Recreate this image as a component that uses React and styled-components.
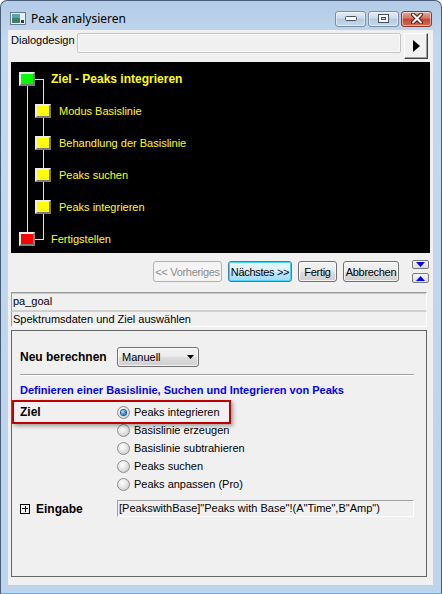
import styled, { createGlobalStyle, css } from "styled-components";

const Global = createGlobalStyle`
  html, body { margin: 0; padding: 0; background: #fff; overflow: hidden; }
  * { box-sizing: border-box; }
`;

const UI = `"Liberation Sans", Arial, sans-serif`;

const Window = styled.div`
  width: 442px;
  height: 594px;
  border: 1px solid #4a5d78;
  border-bottom-color: #2fc4d6;
  border-radius: 7px 7px 0 0;
  background: linear-gradient(180deg, #b3cbe6 0%, #c2d8ef 40px, #bcd4ec 100%);
  padding: 0 8px 8px 7px;
  display: flex;
  flex-direction: column;
  font-family: ${UI};
  font-size: 11px;
  color: #000;
`;

const TitleBar = styled.div`
  height: 29px;
  padding-top: 5px;
  display: flex;
  align-items: center;
`;

const TitleText = styled.span`
  font-family: "Noto Sans", "Open Sans", sans-serif;
  font-size: 12px;
  margin-left: 5px;
  flex: 1;
  color: #000;
`;

const Caption = styled.div`
  display: flex;
  gap: 2px;
  margin-right: 1px;
  margin-top: 1px;
`;

const CapBtn = styled.div`
  width: 31px;
  height: 16px;
  border-radius: 3px;
  border: 1px solid #7a8ca6;
  display: flex;
  align-items: center;
  justify-content: center;
  background: linear-gradient(180deg, #e4edf7 0%, #cbdaea 45%, #b5c9e0 50%, #c6d8ec 100%);
  box-shadow: inset 0 0 0 1px rgba(255, 255, 255, 0.5);
  ${(p) =>
    p.$close &&
    css`
      border-color: #8a3b2f;
      background: linear-gradient(180deg, #e9a99a 0%, #d8725e 45%, #c6432c 50%, #d86c4f 100%);
    `}
`;

const Client = styled.div`
  flex: 1;
  background: #f0f0f0;
  display: flex;
  flex-direction: column;
`;

const DesignRow = styled.div`
  height: 32px;
  display: flex;
  align-items: flex-start;
  padding: 0 5px 0 3px;
`;

const DesignLabel = styled.span`
  line-height: 20px;
  width: 66px;
`;

const DesignInput = styled.div`
  flex: 1;
  height: 20px;
  margin-top: 3px;
  border: 1px solid #c4c4c4;
  border-radius: 2px;
  background: #f0f0f0;
  box-shadow: inset 0 0 0 1px #fafafa;
`;

const PlayBtn = styled.div`
  width: 24px;
  height: 26px;
  margin: 3px 0 0 3px;
  border: 1px solid;
  border-color: #fff #404040 #404040 #fff;
  box-shadow: inset -1px -1px 0 #a0a0a0;
  background: #f0f0f0;
  display: flex;
  align-items: center;
  justify-content: center;
`;

const TreePanel = styled.div`
  position: relative;
  margin: 0 3px;
  height: 191px;
  padding-top: 1px;
  background: #000;
`;

const TreeLines = styled.svg`
  position: absolute;
  left: 0;
  top: 0;
  pointer-events: none;
`;

const TreeRow = styled.div`
  height: 32px;
  display: flex;
  align-items: center;
  padding-left: ${(p) => (p.$child ? 24 : 8)}px;
`;

const NodeBox = styled.div`
  position: relative;
  z-index: 1;
  width: 16px;
  height: 14px;
  border: 2px solid;
  border-color: #ececec #7c7c7c #7c7c7c #ececec;
  background: ${(p) => p.$color};
`;

const NodeText = styled.span`
  margin-left: ${(p) => (p.$child ? 8 : 16)}px;
  color: #ffff00;
  font-size: ${(p) => (p.$bold ? 12 : 11)}px;
  font-weight: ${(p) => (p.$bold ? 700 : 400)};
`;

const NavRow = styled.div`
  height: 39px;
  padding: 8px 4px 0 0;
  display: flex;
  justify-content: flex-end;
  align-items: flex-start;
`;

const Btn = styled.button`
  width: ${(p) => p.$w}px;
  height: 21px;
  margin-left: 6px;
  padding: 0;
  white-space: nowrap;
  letter-spacing: -0.3px;
  font-family: ${UI};
  font-size: 11px;
  color: #000;
  border: 1px solid #707070;
  border-radius: 3px;
  background: linear-gradient(180deg, #f2f2f2 0%, #ebebeb 50%, #dddddd 51%, #cfcfcf 100%);
  box-shadow: inset 0 0 0 1px rgba(255, 255, 255, 0.75);
  ${(p) =>
    p.$primary &&
    css`
      border-color: #3c7fb1;
      background: linear-gradient(180deg, #eaf6fd 0%, #d9f0fc 50%, #bee6fd 51%, #a7d9f5 100%);
      box-shadow: inset 0 0 0 1px #48d5f8;
    `}
  ${(p) =>
    p.disabled &&
    css`
      color: #8c8c8c;
      border-color: #adb2b5;
      background: #f4f4f4;
      box-shadow: none;
    `}
`;

const ArrowStack = styled.div`
  margin: -1px 0 0 13px;
  display: flex;
  flex-direction: column;
  gap: 4px;
`;

const ArrowBtn = styled.div`
  width: 17px;
  height: ${(p) => p.$h}px;
  border: 1px solid #7a7a7a;
  border-radius: 2px;
  background: linear-gradient(180deg, #f6f6f6, #dcdcdc);
  display: flex;
  align-items: center;
  justify-content: center;
`;

const InfoField = styled.div`
  margin: 0 6px 0 3px;
  height: ${(p) => p.$h}px;
  line-height: ${(p) => p.$h - 2}px;
  padding-left: 1px;
  border: 1px solid;
  border-color: ${(p) => (p.$top ? "#9a9a9a #ffffff #d0d0d0 #9a9a9a" : "#d0d0d0 #ffffff #ffffff #9a9a9a")};
  ${(p) => p.$top && css`box-shadow: inset 0 1px 0 #c8c8c8;`}
`;

const Group = styled.div`
  margin: 3px 6px 0 3px;
  height: 247px;
  border: 1px solid #646464;
  padding: 16px 12px 0 8px;
`;

const FormRow = styled.div`
  position: relative;
  display: grid;
  grid-template-columns: 97px 1fr;
  align-items: center;
  min-height: ${(p) => p.$h || 18}px;
`;

const BoldLabel = styled.span`
  font-size: 12px;
  font-weight: 700;
  display: flex;
  align-items: center;
`;

const Select = styled.div`
  width: 82px;
  height: 20px;
  border: 1px solid #707070;
  border-radius: 3px;
  background: linear-gradient(180deg, #f2f2f2 0%, #ebebeb 50%, #dddddd 51%, #cfcfcf 100%);
  box-shadow: inset 0 0 0 1px rgba(255, 255, 255, 0.75);
  display: flex;
  align-items: center;
  justify-content: space-between;
  padding: 0 4px 0 4px;
`;

const Separator = styled.div`
  margin-top: 7px;
  border-top: 1px solid #a0a0a0;
  border-bottom: 1px solid #ffffff;
`;

const Heading = styled.div`
  margin-top: 7px;
  color: #0000ff;
  font-weight: 700;
  font-size: 11px;
  line-height: 14px;
`;

const RadioList = styled.div`
  margin-top: 6px;
  display: grid;
  grid-template-columns: 97px 1fr;
  grid-auto-rows: 18px;
  align-items: center;
`;

const RadioItem = styled.label`
  grid-column: 2;
  display: flex;
  align-items: center;
  gap: 4px;
`;

const RadioDot = styled.span`
  width: 13px;
  height: 13px;
  border-radius: 50%;
  border: 1px solid #8e8f8f;
  background: radial-gradient(circle at 40% 35%, #ffffff 0%, #e6e6e6 45%, #bdbdbd 100%);
  display: flex;
  align-items: center;
  justify-content: center;
  &::after {
    content: "";
    width: 5px;
    height: 5px;
    border-radius: 50%;
    display: ${(p) => (p.$on ? "block" : "none")};
    background: radial-gradient(circle at 35% 35%, #bfe8ff 0%, #2b8ad8 55%, #0d4f96 100%);
    box-shadow: 0 0 0 1px #1e5a92;
  }
`;

const Callout = styled.div`
  position: absolute;
  left: -8px;
  top: -5px;
  width: 219px;
  height: 24px;
  border: 2px solid #c00000;
  box-shadow: 2px 2px 4px rgba(0, 0, 0, 0.35);
  pointer-events: none;
`;

const InputRow = styled.div`
  margin-top: 7px;
  display: grid;
  grid-template-columns: 97px 1fr;
  align-items: center;
`;

const PlusBox = styled.span`
  width: 10px;
  height: 10px;
  margin-right: 6px;
  border: 1px solid #000;
  position: relative;
  &::before,
  &::after {
    content: "";
    position: absolute;
    background: #000;
  }
  &::before { left: 1px; right: 1px; top: 3.5px; height: 1px; }
  &::after { top: 1px; bottom: 1px; left: 3.5px; width: 1px; }
`;

const RangeField = styled.div`
  height: 17px;
  line-height: 15px;
  padding-left: 1px;
  border: 1px solid;
  border-color: #a0a0a0 #ffffff #ffffff #a0a0a0;
  white-space: nowrap;
`;

const treeItems = [
  { label: "Modus Basislinie" },
  { label: "Behandlung der Basislinie" },
  { label: "Peaks suchen" },
  { label: "Peaks integrieren" },
];

const radios = [
  "Peaks integrieren",
  "Basislinie erzeugen",
  "Basislinie subtrahieren",
  "Peaks suchen",
  "Peaks anpassen (Pro)",
];

export default function App() {
  return (
    <>
      <Global />
      <Window>
        <TitleBar>
          <svg width="16" height="13" viewBox="0 0 16 13" style={{ marginLeft: 2 }}>
            <rect x="0.5" y="0.5" width="15" height="12" fill="#e8eef4" stroke="#6a7a8a" />
            <rect x="2" y="2" width="8" height="9" fill="#3f7f6a" />
            <rect x="2" y="2" width="8" height="4" fill="#5aa0b8" />
            <rect x="11" y="8" width="3" height="3" fill="#2d3d50" />
          </svg>
          <TitleText>Peak analysieren</TitleText>
          <Caption>
            <CapBtn>
              <svg width="12" height="6" viewBox="0 0 12 6">
                <rect x="0.5" y="0.5" width="11" height="4" rx="1" fill="#fff" stroke="#44536a" />
              </svg>
            </CapBtn>
            <CapBtn>
              <svg width="11" height="10" viewBox="0 0 11 10">
                <rect x="0.5" y="0.5" width="10" height="8" fill="#fff" stroke="#44536a" />
                <rect x="3.5" y="3.5" width="4" height="2" fill="#c8d6e6" stroke="#44536a" />
              </svg>
            </CapBtn>
            <CapBtn $close>
              <svg width="14" height="11" viewBox="0 0 14 11">
                <path d="M3 1.5 L11 9.5 M11 1.5 L3 9.5" stroke="#5a1b12" strokeWidth="4" strokeLinecap="round" />
                <path d="M3 1.5 L11 9.5 M11 1.5 L3 9.5" stroke="#ffffff" strokeWidth="2" strokeLinecap="round" />
              </svg>
            </CapBtn>
          </Caption>
        </TitleBar>
        <Client>
          <DesignRow>
            <DesignLabel>Dialogdesign</DesignLabel>
            <DesignInput />
            <PlayBtn>
              <svg width="7" height="12" viewBox="0 0 7 12">
                <path d="M0 0 L7 6 L0 12 Z" fill="#000" />
              </svg>
            </PlayBtn>
          </DesignRow>

          <TreePanel>
            <TreeLines width="60" height="191">
              <g stroke="#ffff00" strokeWidth="1" fill="none">
                <line x1="16.5" y1="24" x2="16.5" y2="170" />
                <line x1="24" y1="17.5" x2="33" y2="17.5" />
                <line x1="32.5" y1="17.5" x2="32.5" y2="177.5" />
                <line x1="24" y1="177.5" x2="33" y2="177.5" />
              </g>
            </TreeLines>
            <TreeRow>
              <NodeBox $color="#00ff00" />
              <NodeText $bold>Ziel - Peaks integrieren</NodeText>
            </TreeRow>
            {treeItems.map((item) => (
              <TreeRow key={item.label} $child>
                <NodeBox $color="#ffff00" />
                <NodeText $child>{item.label}</NodeText>
              </TreeRow>
            ))}
            <TreeRow>
              <NodeBox $color="#ff0000" />
              <NodeText>Fertigstellen</NodeText>
            </TreeRow>
          </TreePanel>

          <NavRow>
            <Btn $w={69} disabled>&lt;&lt; Vorheriges</Btn>
            <Btn $w={64} $primary>Nächstes &gt;&gt;</Btn>
            <Btn $w={39}>Fertig</Btn>
            <Btn $w={56}>Abbrechen</Btn>
            <ArrowStack>
              <ArrowBtn $h={9}>
                <svg width="9" height="5" viewBox="0 0 9 5">
                  <path d="M0 0 L9 0 L4.5 5 Z" fill="#0000ff" />
                </svg>
              </ArrowBtn>
              <ArrowBtn $h={10}>
                <svg width="9" height="5" viewBox="0 0 9 5">
                  <path d="M0 5 L9 5 L4.5 0 Z" fill="#0000ff" />
                </svg>
              </ArrowBtn>
            </ArrowStack>
          </NavRow>

          <InfoField $h={19} $top>pa_goal</InfoField>
          <InfoField $h={16}>Spektrumsdaten und Ziel auswählen</InfoField>

          <Group>
            <FormRow $h={20}>
              <BoldLabel>Neu berechnen</BoldLabel>
              <Select>
                <span>Manuell</span>
                <svg width="7" height="4" viewBox="0 0 7 4">
                  <path d="M0 0 L7 0 L3.5 4 Z" fill="#000" />
                </svg>
              </Select>
            </FormRow>
            <Separator />
            <Heading>Definieren einer Basislinie, Suchen und Integrieren von Peaks</Heading>
            <RadioList>
              <BoldLabel style={{ gridColumn: 1, gridRow: 1, position: "relative" }}>
                Ziel
                <Callout />
              </BoldLabel>
              {radios.map((r, i) => (
                <RadioItem key={r} style={{ gridRow: i + 1 }}>
                  <RadioDot $on={i === 0} />
                  {r}
                </RadioItem>
              ))}
            </RadioList>
            <InputRow>
              <BoldLabel>
                <PlusBox />
                Eingabe
              </BoldLabel>
              <RangeField>[PeakswithBase]"Peaks with Base"!(A"Time",B"Amp")</RangeField>
            </InputRow>
          </Group>
        </Client>
      </Window>
    </>
  );
}
